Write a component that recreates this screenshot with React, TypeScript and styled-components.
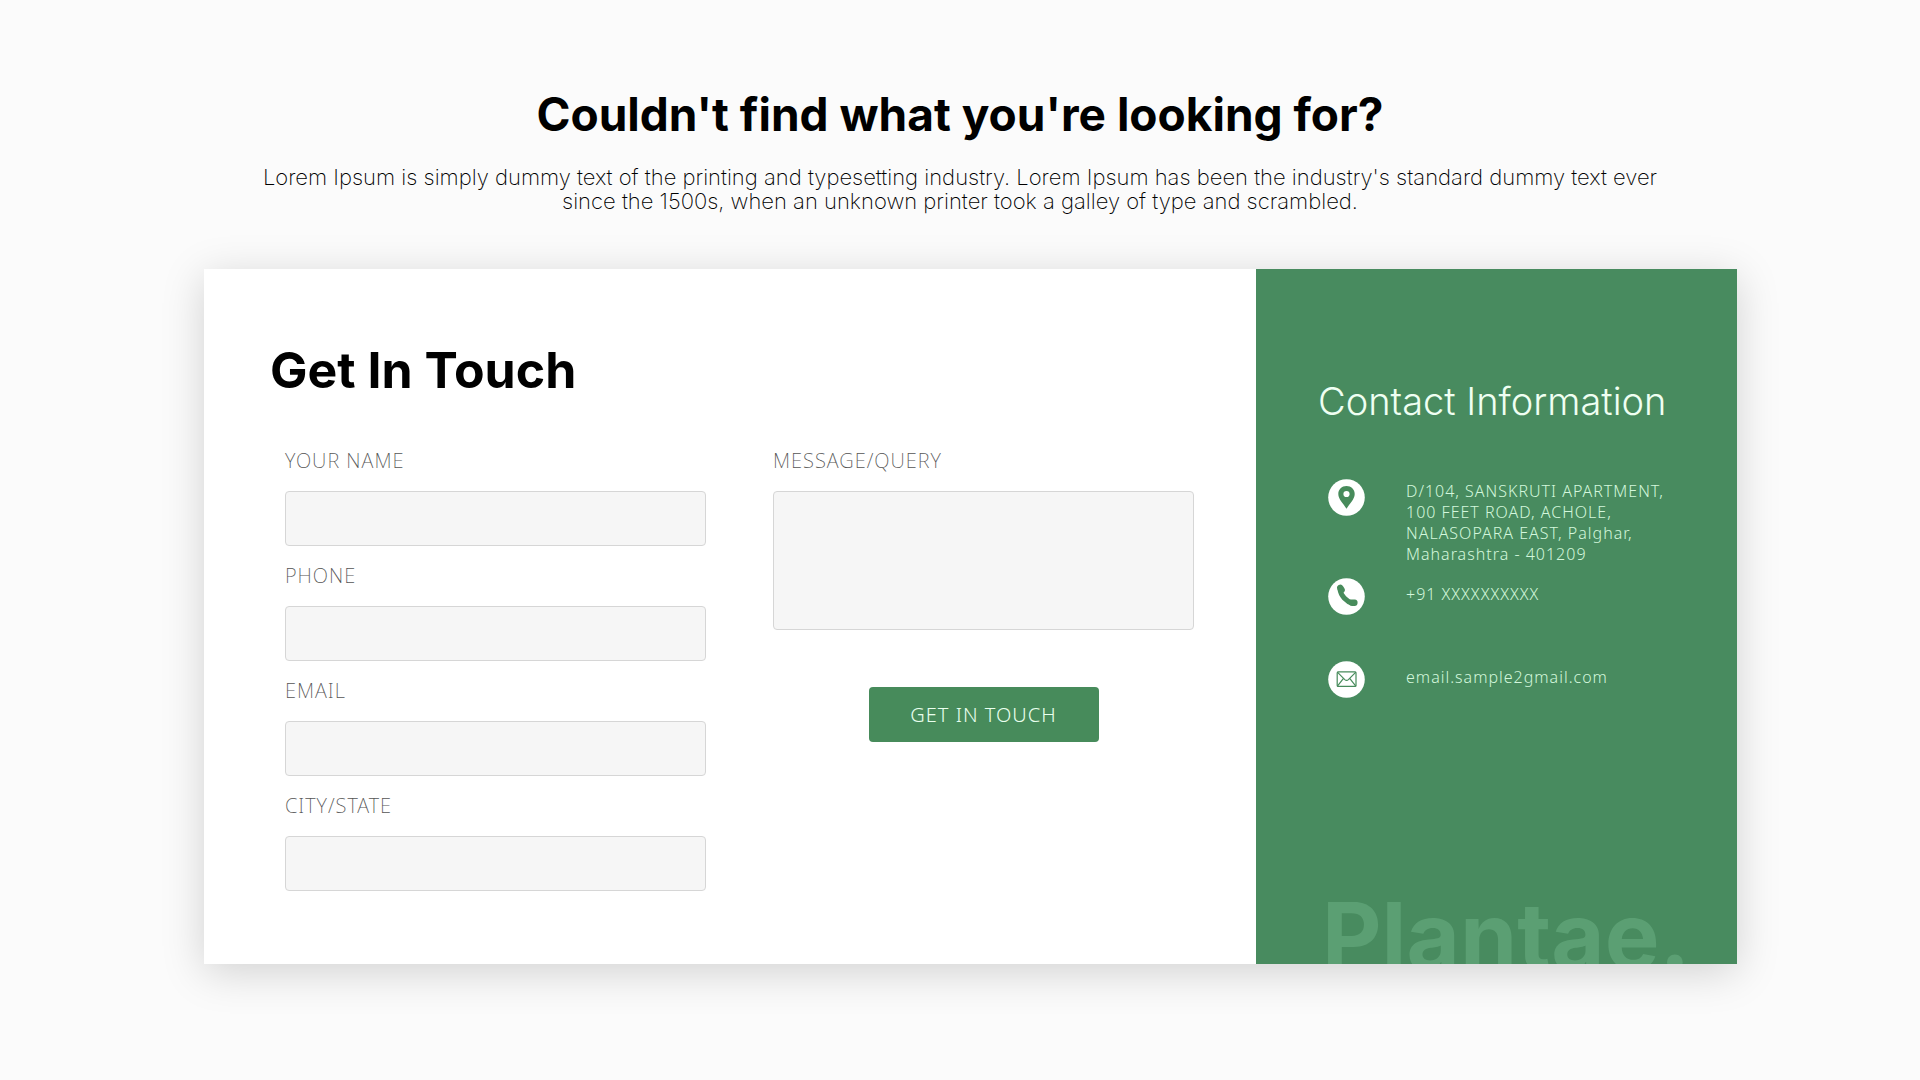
import React from "react";
import styled, { createGlobalStyle } from "styled-components";

const GlobalStyle = createGlobalStyle`
  *, *::before, *::after { box-sizing: border-box; }
  body {
    margin: 0;
    background: #fbfbfb;
    color: #000;
    font-family: Inter, "Open Sans", sans-serif;
  }
  h1, h2, p { margin: 0; }
`;

const Page = styled.main`
  min-height: 100vh;
  padding: 86px 183px 116px 204px;

  @media (max-width: 1200px) {
    padding: 48px 24px;
  }
`;

const Intro = styled.header`
  text-align: center;
  margin: 0 21px 56px 0;
`;

const Title = styled.h1`
  font-size: 46px;
  line-height: 56px;
  font-weight: 700;
`;

const Lead = styled.p`
  margin-top: 23px;
  font-size: 22px;
  line-height: 24px;
  font-weight: 200;
`;

const Card = styled.section`
  display: grid;
  grid-template-columns: minmax(0, 1052fr) minmax(0, 481fr);
  background: #fff;
  box-shadow: 0 8px 40px rgba(0, 0, 0, 0.17);

  @media (max-width: 1200px) {
    grid-template-columns: 1fr;
  }
`;

const FormPanel = styled.form`
  padding: 72px 62px 73px 66px;
`;

const FormTitle = styled.h2`
  font-size: 50px;
  line-height: 58px;
  font-weight: 700;
`;

const Columns = styled.div`
  display: grid;
  grid-template-columns: repeat(auto-fit, minmax(300px, 1fr));
  column-gap: 67px;
  margin: 48px 0 0 15px;
`;

const Column = styled.div`
  display: flex;
  flex-direction: column;
  gap: 16px;
`;

const Field = styled.div`
  display: flex;
  flex-direction: column;
  gap: 16px;
`;

const Label = styled.label`
  font: 200 20px/28px "Noto Sans", sans-serif;
  letter-spacing: 1px;
  color: #555;
`;

const TextInput = styled.input`
  width: 100%;
  height: 55px;
  padding: 0 16px;
  border: 1px solid #d6d6d6;
  border-radius: 4px;
  background: #f6f6f6;
  font: 300 20px/28px "Noto Sans", sans-serif;
`;

const MessageInput = styled.textarea`
  display: block;
  width: 100%;
  height: 139px;
  padding: 12px 16px;
  border: 1px solid #d6d6d6;
  border-radius: 4px;
  background: #f6f6f6;
  font: 300 20px/28px "Noto Sans", sans-serif;
  resize: none;
`;

const SubmitButton = styled.button`
  align-self: center;
  width: 230px;
  height: 55px;
  margin-top: 41px;
  border: 0;
  border-radius: 4px;
  background: #478b5b;
  color: #e9ffee;
  font: 300 20px/28px "Noto Sans", sans-serif;
  letter-spacing: 1px;
  cursor: pointer;
`;

const InfoPanel = styled.aside`
  display: flex;
  flex-direction: column;
  padding: 110px 24px 0 62px;
  overflow: hidden;
  background: #488b5f;
  color: #effff2;
`;

const InfoTitle = styled.h2`
  font-size: 38px;
  line-height: 44px;
  font-weight: 300;
  white-space: nowrap;
`;

const ContactList = styled.address`
  display: flex;
  flex-direction: column;
  margin: 56px 0 0 10px;
  font: 300 16px/21px "Noto Sans", sans-serif;
  letter-spacing: 1px;
  color: #d3f7dc;
`;

const ContactRow = styled.div<{ $height: number }>`
  display: flex;
  align-items: flex-start;
  gap: 41px;
  min-height: ${({ $height }) => $height}px;
`;

const Badge = styled.svg`
  flex: none;
  width: 37px;
  height: 37px;
`;

const ContactText = styled.p`
  padding-top: 2px;
`;

const ContactLink = styled.a`
  padding-top: 6px;
  color: inherit;
  text-decoration: none;
`;

const Watermark = styled.div`
  height: 76px;
  margin: auto 0 0 4px;
  font-size: 92px;
  line-height: 96px;
  font-weight: 700;
  color: #5b9f73;
  white-space: nowrap;
`;

const PinBadge = () => (
  <Badge viewBox="0 0 37 37" aria-hidden="true">
    <circle cx="18.500" cy="18.500" r="18.300" fill="#fff" />
    <path
      d="M18.500 7C13.900 7 10.300 10.500 10.300 15c0 5.400 5.200 9.600 8.200 14.800C21.500 24.600 26.700 20.400 26.700 15c0-4.500-3.600-8-8.200-8z"
      fill="#478b5b"
    />
    <circle cx="18.500" cy="15" r="3.100" fill="#fff" />
  </Badge>
);

const PhoneBadge = () => (
  <Badge viewBox="0 0 37 37" aria-hidden="true">
    <circle cx="18.500" cy="18.500" r="18.300" fill="#fff" />
    <g fill="none" stroke="#478b5b" strokeLinecap="round">
      <path d="M12 11.500C12.800 17.500 18 23.500 25 25.500" strokeWidth="5" />
      <path d="M12.300 9.800L13.600 12" strokeWidth="6.400" />
      <path d="M23.800 24.600L26.400 24.800" strokeWidth="6.400" />
    </g>
  </Badge>
);

const MailBadge = () => (
  <Badge viewBox="0 0 37 37" aria-hidden="true">
    <circle cx="18.500" cy="18.500" r="18.300" fill="#fff" />
    <g fill="none" stroke="#478b5b" strokeWidth="1.200" strokeLinecap="round" strokeLinejoin="round">
      <rect x="9.200" y="10.900" width="18.800" height="14.500" rx="1" />
      <path d="M9.600 11.400l7.200 7.200c1.100 1 2.500 1 3.600 0l7.200-7.200M9.600 24.900l5.900-7.500M27.600 24.900l-5.900-7.500" />
    </g>
  </Badge>
);

const FIELDS = [
  { id: "name", label: "YOUR NAME", type: "text" },
  { id: "phone", label: "PHONE", type: "tel" },
  { id: "email", label: "EMAIL", type: "email" },
  { id: "city", label: "CITY/STATE", type: "text" },
];

export default function App() {
  return (
    <>
      <GlobalStyle />
      <Page>
        <Intro>
          <Title>Couldn't find what you're looking for?</Title>
          <Lead>
            Lorem Ipsum is simply dummy text of the printing and typesetting industry. Lorem Ipsum
            has been the industry's standard dummy text ever
            <br /> since the 1500s, when an unknown printer took a galley of type and scrambled.
          </Lead>
        </Intro>
        <Card>
          <FormPanel onSubmit={(event) => event.preventDefault()}>
            <FormTitle>Get In Touch</FormTitle>
            <Columns>
              <Column>
                {FIELDS.map(({ id, label, type }) => (
                  <Field key={id}>
                    <Label htmlFor={id}>{label}</Label>
                    <TextInput id={id} name={id} type={type} />
                  </Field>
                ))}
              </Column>
              <Column>
                <Field>
                  <Label htmlFor="message">MESSAGE/QUERY</Label>
                  <MessageInput id="message" name="message" />
                </Field>
                <SubmitButton type="submit">GET IN TOUCH</SubmitButton>
              </Column>
            </Columns>
          </FormPanel>
          <InfoPanel>
            <InfoTitle>Contact Information</InfoTitle>
            <ContactList>
              <ContactRow $height={99}>
                <PinBadge />
                <ContactText>
                  D/104, SANSKRUTI APARTMENT,
                  <br />
                  100 FEET ROAD, ACHOLE,
                  <br />
                  NALASOPARA EAST, Palghar,
                  <br />
                  Maharashtra - 401209
                </ContactText>
              </ContactRow>
              <ContactRow $height={83}>
                <PhoneBadge />
                <ContactLink href="tel:+91">+91 XXXXXXXXXX</ContactLink>
              </ContactRow>
              <ContactRow $height={37}>
                <MailBadge />
                <ContactLink href="mailto:email.sample2gmail.com">email.sample2gmail.com</ContactLink>
              </ContactRow>
            </ContactList>
            <Watermark>Plantae.</Watermark>
          </InfoPanel>
        </Card>
      </Page>
    </>
  );
}
